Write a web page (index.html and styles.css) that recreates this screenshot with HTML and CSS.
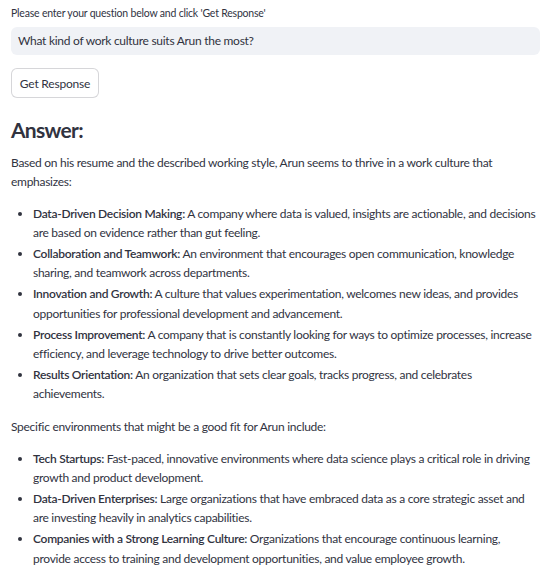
FILE: index.html
```html
<!DOCTYPE html>
<html lang="en">
<head>
<meta charset="utf-8">
<title>Get Response</title>
<link rel="stylesheet" href="styles.css">
</head>
<body>
<main class="main">
  <label class="label" for="q">Please enter your question below and click 'Get Response'</label>
  <div class="input" id="q">What kind of work culture suits Arun the most?</div>
  <button class="btn" type="button">Get Response</button>

  <h3 class="heading">Answer:</h3>
  <p class="para">Based on his resume and the described working style, Arun seems to thrive in a work culture that emphasizes:</p>
  <ul class="list">
    <li><strong>Data-Driven Decision Making:</strong> A company where data is valued, insights are actionable, and decisions are based on evidence rather than gut feeling.</li>
    <li><strong>Collaboration and Teamwork:</strong> An environment that encourages open communication, knowledge sharing, and teamwork across departments.</li>
    <li><strong>Innovation and Growth:</strong> A culture that values experimentation, welcomes new ideas, and provides opportunities for professional development and advancement.</li>
    <li><strong>Process Improvement:</strong> A company that is constantly looking for ways to optimize processes, increase efficiency, and leverage technology to drive better outcomes.</li>
    <li><strong>Results Orientation:</strong> An organization that sets clear goals, tracks progress, and celebrates achievements.</li>
  </ul>
  <p class="para">Specific environments that might be a good fit for Arun include:</p>
  <ul class="list">
    <li><strong>Tech Startups:</strong> Fast-paced, innovative environments where data science plays a critical role in driving growth and product development.</li>
    <li><strong>Data-Driven Enterprises:</strong> Large organizations that have embraced data as a core strategic asset and are investing heavily in analytics capabilities.</li>
    <li><strong>Companies with a Strong Learning Culture:</strong> Organizations that encourage continuous learning, provide access to training and development opportunities, and value employee growth.</li>
  </ul>
</main>
</body>
</html>
```
FILE: styles.css
```css
html, body {
  margin: 0;
  padding: 0;
  background: #ffffff;
}
body {
  font-family: Lato, "Liberation Sans", sans-serif;
  color: #31333f;
  font-size: 12px;
  line-height: 1.6;
  letter-spacing: -0.28px;
}
.main {
  width: 529px;
  padding: 5px 11px 0 11px;
  display: flex;
  flex-direction: column;
  align-items: flex-start;
}
.label {
  display: block;
  font-size: 10.5px;
  line-height: 16px;
  margin-bottom: 6px;
  letter-spacing: -0.2px;
}
.input {
  box-sizing: border-box;
  width: 529px;
  height: 28px;
  background: #f0f2f6;
  border-radius: 6px;
  padding: 0 7px;
  display: flex;
  align-items: center;
  font-size: 12px;
}
.btn {
  margin-top: 13px;
  box-sizing: border-box;
  width: 88px;
  height: 30px;
  background: #ffffff;
  border: 1px solid rgba(49, 51, 63, 0.2);
  border-radius: 6px;
  font-family: inherit;
  font-size: 12px;
  letter-spacing: -0.2px;
  color: #31333f;
  padding: 0;
}
.heading {
  margin: 19px 0 11px 0;
  font-size: 21px;
  line-height: 1.2;
  font-weight: 700;
  letter-spacing: -0.7px;
}
.para {
  margin: 0 0 12px 0;
}
.list {
  margin: 0 0 12px 0;
  padding-left: 22px;
}
.list li {
  margin: 0 0 2px 0;
}
.list strong {
  font-weight: 600;
}
```
